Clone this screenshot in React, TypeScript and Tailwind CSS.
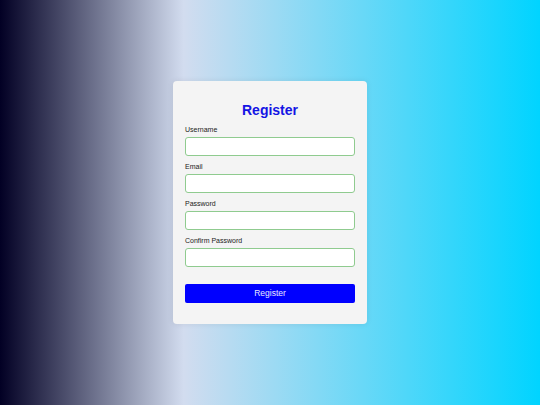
import React from "react";

const fields = [
  { id: "username", label: "Username", type: "text" },
  { id: "email", label: "Email", type: "email" },
  { id: "password", label: "Password", type: "password" },
  { id: "confirm", label: "Confirm Password", type: "password" },
];

export default function App() {
  return (
    <div className="flex h-[405px] w-full items-center justify-center bg-[linear-gradient(90deg,#020024_0%,#d2dcef_34%,#00d4ff_100%)] font-['Liberation_Sans',Arial,sans-serif]">
      <form
        className="flex w-[194px] flex-col rounded-[4px] bg-[#f4f4f4] px-[12px] pb-[21px] pt-[21px] shadow-[0_0_6px_rgba(0,0,0,0.08)]"
        onSubmit={(e) => e.preventDefault()}
      >
        <h2 className="mb-[8px] text-center text-[14px] font-bold leading-[16px] text-[#1414e4]">
          Register
        </h2>
        {fields.map((f) => (
          <div key={f.id} className="mb-[7px] flex flex-col">
            <label
              htmlFor={f.id}
              className="mb-[3px] text-[7px] leading-[8px] text-[#222]"
            >
              {f.label}
            </label>
            <input
              id={f.id}
              type={f.type}
              className="h-[19px] w-full rounded-[3px] border border-[#8fcb8f] bg-white px-[4px] text-[8px] outline-none"
            />
          </div>
        ))}
        <button
          type="submit"
          className="mt-[10px] h-[19px] w-full rounded-[2px] bg-[#0000ff] text-[8.5px] leading-[19px] text-[#e8e8ff]"
        >
          Register
        </button>
      </form>
    </div>
  );
}
